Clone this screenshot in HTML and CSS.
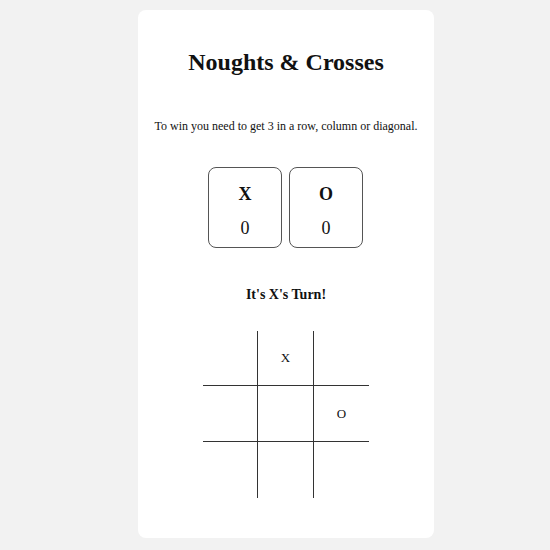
FILE: index.html
```html
<!DOCTYPE html>
<html>
<head>
<meta charset="utf-8">
<link rel="stylesheet" href="styles.css">
</head>
<body>
<main class="card">
  <h1 class="title">Noughts &amp; Crosses</h1>
  <p class="rules">To win you need to get 3 in a row, column or diagonal.</p>
  <div class="scores">
    <div class="score">
      <span class="player">X</span>
      <span class="points">0</span>
    </div>
    <div class="score">
      <span class="player">O</span>
      <span class="points">0</span>
    </div>
  </div>
  <h2 class="turn">It's X's Turn!</h2>
  <div class="board">
    <div class="cell"></div>
    <div class="cell">X</div>
    <div class="cell"></div>
    <div class="cell"></div>
    <div class="cell"></div>
    <div class="cell">O</div>
    <div class="cell"></div>
    <div class="cell"></div>
    <div class="cell"></div>
  </div>
</main>
</body>
</html>
```
FILE: styles.css
```css
html, body {
  margin: 0;
  padding: 0;
  background: #f2f2f2;
  font-family: "Liberation Serif", "Times New Roman", serif;
  color: #111;
}

.card {
  box-sizing: border-box;
  width: 296px;
  height: 528px;
  margin: 10px 0 0 138px;
  background: #fff;
  border-radius: 8px;
  display: flex;
  flex-direction: column;
  align-items: center;
  padding-top: 39px;
}

.title {
  margin: 0;
  font-size: 24px;
  font-weight: bold;
  line-height: 27px;
}

.rules {
  margin: 43px 0 0;
  font-size: 12px;
  line-height: 15px;
}

.scores {
  display: flex;
  gap: 7px;
  margin-top: 33px;
  margin-right: 1px;
}

.score {
  box-sizing: border-box;
  width: 74px;
  height: 81px;
  border: 1px solid #555;
  border-radius: 8px;
  display: flex;
  flex-direction: column;
  align-items: center;
  padding-top: 16px;
}

.player {
  font-size: 18px;
  font-weight: bold;
  line-height: 20px;
}

.points {
  margin-top: 14px;
  font-size: 18px;
  line-height: 20px;
}

.turn {
  margin: 39px 0 0;
  font-size: 14px;
  font-weight: bold;
  line-height: 16px;
}

.board {
  margin-top: 28px;
  display: grid;
  grid-template-columns: 55px 56px 55px;
  grid-template-rows: 55px 56px 56px;
}

.cell {
  display: flex;
  align-items: center;
  justify-content: center;
  font-size: 13px;
}

.cell:nth-child(1), .cell:nth-child(2),
.cell:nth-child(4), .cell:nth-child(5),
.cell:nth-child(7), .cell:nth-child(8) {
  border-right: 1px solid #333;
}

.cell:nth-child(-n+6) {
  border-bottom: 1px solid #333;
}
```
